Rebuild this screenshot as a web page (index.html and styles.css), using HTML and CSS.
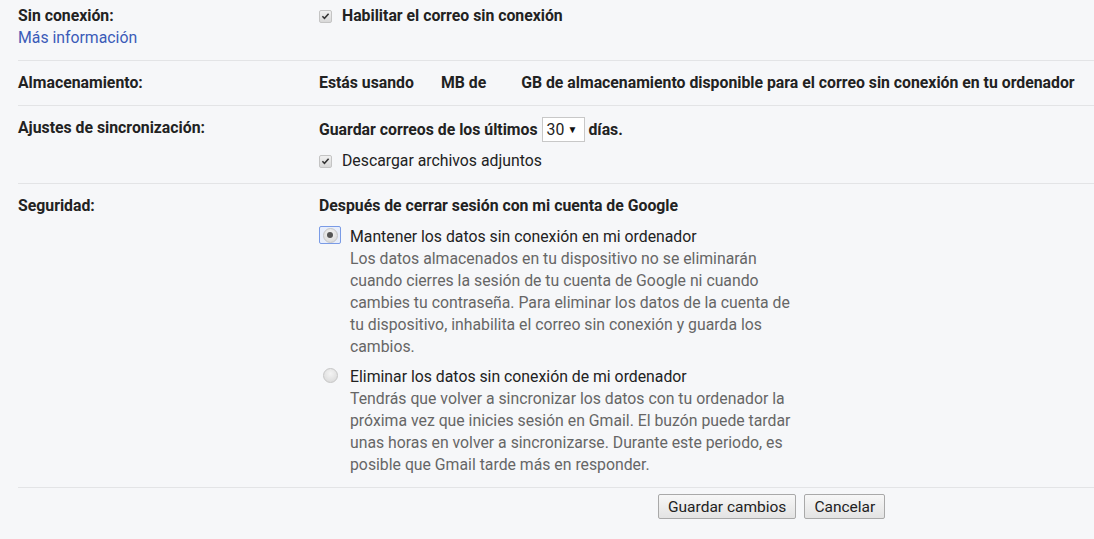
FILE: index.html
```html
<!DOCTYPE html>
<html lang="es">
<head>
<meta charset="utf-8">
<title>Ajustes sin conexión</title>
<link rel="stylesheet" href="styles.css">
</head>
<body>
<div class="page">
  <div class="row row-first">
    <div class="label">
      <div class="b">Sin conexión:</div>
      <a class="link" href="#">Más información</a>
    </div>
    <div class="value">
      <label class="check-line">
        <span class="cb"><svg viewBox="0 0 12 12" width="12" height="12"><path d="M2.6 6.2 L4.9 8.5 L9.4 3.6" fill="none" stroke="#333" stroke-width="1.7"/></svg></span>
        <span class="b">Habilitar el correo sin conexión</span>
      </label>
    </div>
  </div>

  <div class="row">
    <div class="label b">Almacenamiento:</div>
    <div class="value b">Estás usando<span class="blank1"></span>MB de<span class="blank2"></span>GB de almacenamiento disponible para el correo sin conexión en tu ordenador</div>
  </div>

  <div class="row">
    <div class="label b">Ajustes de sincronización:</div>
    <div class="value">
      <div class="sync-line b">Guardar correos de los últimos <span class="select">30<span class="arrow">▼</span></span> días.</div>
      <label class="check-line second">
        <span class="cb"><svg viewBox="0 0 12 12" width="12" height="12"><path d="M2.6 6.2 L4.9 8.5 L9.4 3.6" fill="none" stroke="#333" stroke-width="1.7"/></svg></span>
        <span>Descargar archivos adjuntos</span>
      </label>
    </div>
  </div>

  <div class="row row-last">
    <div class="label b">Seguridad:</div>
    <div class="value">
      <div class="b">Después de cerrar sesión con mi cuenta de Google</div>
      <div class="option">
        <span class="radio-wrap focused"><span class="radio checked"></span></span>
        <div class="opt-text">
          <div class="opt-title">Mantener los datos sin conexión en mi ordenador</div>
          <div class="opt-desc">Los datos almacenados en tu dispositivo no se eliminarán cuando cierres la sesión de tu cuenta de Google ni cuando cambies tu contraseña. Para eliminar los datos de la cuenta de tu dispositivo, inhabilita el correo sin conexión y guarda los cambios.</div>
        </div>
      </div>
      <div class="option second-option">
        <span class="radio-wrap"><span class="radio"></span></span>
        <div class="opt-text">
          <div class="opt-title">Eliminar los datos sin conexión de mi ordenador</div>
          <div class="opt-desc">Tendrás que volver a sincronizar los datos con tu ordenador la próxima vez que inicies sesión en Gmail. El buzón puede tardar unas horas en volver a sincronizarse. Durante este periodo, es posible que Gmail tarde más en responder.</div>
        </div>
      </div>
    </div>
  </div>

  <div class="actions">
    <button class="btn" type="button">Guardar cambios</button>
    <button class="btn" type="button">Cancelar</button>
  </div>
</div>
</body>
</html>
```

FILE: styles.css
```css
html, body {
  margin: 0;
  padding: 0;
  background: #f6f7f9;
}
body {
  font-family: Roboto, "Noto Sans", Arial, sans-serif;
  font-size: 15.8px;
  line-height: 22px;
  color: #222;
}
.page {
  padding: 5px 0 0 18px;
}
.b {
  font-weight: bold;
}
.row {
  display: grid;
  grid-template-columns: 301px 1fr;
  padding: 11px 0;
  border-bottom: 1px solid #e3e4e6;
}
.row-first {
  padding-top: 0;
}
.label {
  color: #222;
}
.link {
  color: #3b5bb8;
  text-decoration: none;
}
.value {
  white-space: nowrap;
}
.check-line {
  display: flex;
  align-items: center;
  gap: 10px;
}
.check-line.second {
  margin-top: 8px;
}
.cb {
  width: 11px;
  height: 11px;
  border: 1px solid #c4c4c4;
  border-radius: 2px;
  background: linear-gradient(#f0f0f0, #d8d8d8);
  display: inline-flex;
  align-items: center;
  justify-content: center;
}
.cb svg {
  display: block;
}
.blank1 {
  display: inline-block;
  width: 27px;
}
.blank2 {
  display: inline-block;
  width: 35px;
}
.sync-line {
  height: 25px;
  display: flex;
  align-items: center;
  white-space: pre;
}
.select {
  display: inline-flex;
  align-items: center;
  justify-content: space-between;
  box-sizing: border-box;
  width: 43px;
  height: 25px;
  padding: 0 6px 0 4px;
  background: #fff;
  border: 1px solid #c8c8c8;
  font-weight: normal;
  color: #222;
}
.arrow {
  font-size: 10px;
  line-height: 1;
  color: #111;
}
.option {
  display: flex;
  margin-top: 9px;
}
.option.second-option {
  margin-top: 8px;
}
.radio-wrap {
  width: 22px;
  height: 18px;
  box-sizing: border-box;
  display: flex;
  align-items: center;
  justify-content: center;
  margin-right: 9px;
  border: 1px solid transparent;
  border-radius: 2px;
}
.radio-wrap.focused {
  border-color: #7a9be6;
  background: #e8eefb;
}
.radio {
  flex: none;
  width: 15px;
  height: 15px;
  box-sizing: border-box;
  border-radius: 50%;
  border: 1px solid #c6c6c6;
  background: radial-gradient(circle at 50% 35%, #f4f4f4, #d6d6d6);
  position: relative;
}
.radio.checked::after {
  content: "";
  position: absolute;
  left: 3.5px;
  top: 3.5px;
  width: 6px;
  height: 6px;
  border-radius: 50%;
  background: #555;
}
.opt-text {
  width: 450px;
  white-space: normal;
}
.opt-title {
  color: #222;
}
.opt-desc {
  color: #666;
}
.actions {
  display: flex;
  gap: 8px;
  padding: 6px 0 0 640px;
}
.btn {
  font-family: Roboto, "Noto Sans", Arial, sans-serif;
  font-size: 15.5px;
  color: #222;
  height: 25px;
  padding: 0 9px;
  border: 1px solid #a9a9a9;
  border-radius: 2px;
  background: linear-gradient(#f7f7f7, #e3e3e3);
  line-height: 22px;
}
```
